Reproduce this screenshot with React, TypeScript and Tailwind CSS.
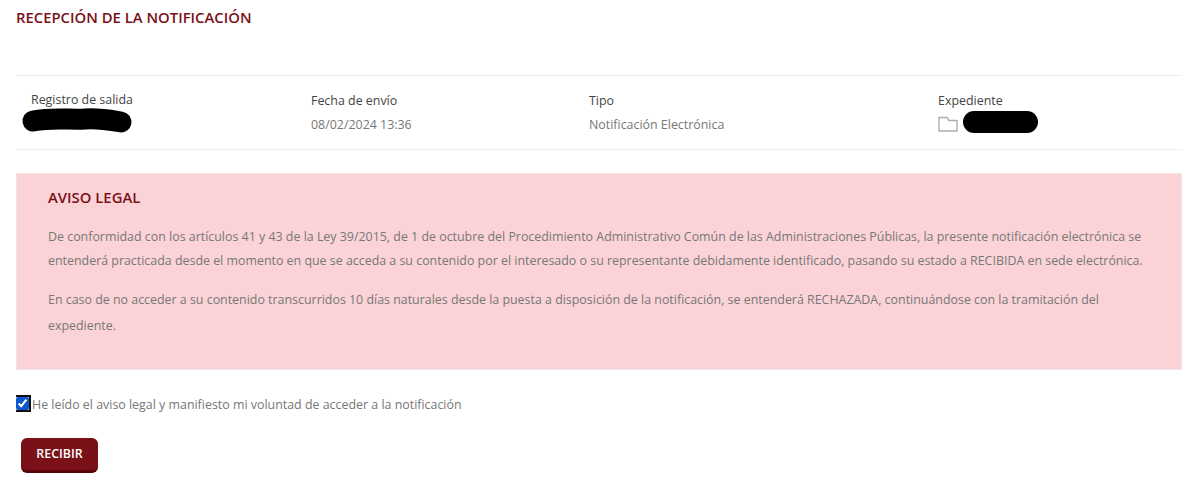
export default function App() {
  return (
    <div className="h-[504px] w-[1200px] overflow-hidden bg-white pl-4 pr-[18px] font-['Open_Sans',sans-serif] text-[12.42px] text-[#777]">
      <h1 className="pt-2 text-[14.85px] leading-[19px] font-semibold text-[#7a1018]">RECEPCIÓN DE LA NOTIFICACIÓN</h1>

      {/* Datos de la notificación */}
      <div className="mt-[48px] flex h-[75px] border-y border-[#eeeeee]">
        <div className="w-[295px] pl-[15px] pt-[15px]">
          <div className="leading-[17px] font-medium text-[#444]">Registro de salida</div>
          <svg width="116" height="28" viewBox="0 0 116 28" className="-ml-3 -mt-[1px]">
            <path d="M14 14C35 10 50 13 66 12C80 11 90 13 102 15" fill="none" stroke="#000" strokeWidth="21" strokeLinecap="round" />
          </svg>
        </div>
        <div className="w-[278px] pt-[16px]">
          <div className="leading-[17px] font-medium text-[#444]">Fecha de envío</div>
          <div className="mt-[7px] leading-[17px]">08/02/2024 13:36</div>
        </div>
        <div className="w-[349px] pt-[16px]">
          <div className="leading-[17px] font-medium text-[#444]">Tipo</div>
          <div className="mt-[7px] leading-[17px]">Notificación Electrónica</div>
        </div>
        <div className="pt-[16px]">
          <div className="leading-[17px] font-medium text-[#444]">Expediente</div>
          <div className="mt-[2px] flex items-center gap-[5px]">
            <svg width="20" height="16" viewBox="0 0 20 16" fill="none" stroke="#aaaaaa" strokeWidth="1.3" className="mt-[4px]">
              <path d="M1 1.5h8l2 3h8V15H1z" />
            </svg>
            <div className="h-[22px] w-[75px] rounded-full bg-black" />
          </div>
        </div>
      </div>

      {/* Aviso legal */}
      <div className="mt-[23px] h-[197px] border border-[#f0e6e7] bg-[#fbd3d7] pl-[31px] pr-4 pt-[13px] text-[#777]">
        <h2 className="text-[14.85px] leading-[20px] font-semibold text-[#7a1018]">AVISO LEGAL</h2>
        <p className="mt-[18px] leading-[24px]">
          De conformidad con los artículos 41 y 43 de la Ley 39/2015, de 1 de octubre del Procedimiento Administrativo Común de las Administraciones Públicas, la presente notificación electrónica se entenderá practicada desde el momento en que se acceda a su contenido por el interesado o su representante debidamente identificado, pasando su estado a RECIBIDA en sede electrónica.
        </p>
        <p className="mt-[14px] leading-[26px]">
          En caso de no acceder a su contenido transcurridos 10 días naturales desde la puesta a disposición de la notificación, se entenderá RECHAZADA, continuándose con la tramitación del expediente.
        </p>
      </div>

      <label className="mt-[25px] flex h-[18px] items-center">
        {/* el borde izquierdo del foco queda recortado, como en la captura */}
        <span className="-mt-[1px] flex h-[19px] w-[16px] items-center overflow-hidden">
          <input type="checkbox" defaultChecked className="m-0 h-[13px] w-[13px] shrink-0 rounded-[2px] accent-[#0b57d0] outline-2 outline-[#101010]" />
        </span>
        <span className="mt-[2px]">He leído el aviso legal y manifiesto mi voluntad de acceder a la notificación</span>
      </label>

      <button className="ml-[5px] mt-[25px] h-[35px] w-[77px] rounded-[6px] border-b-[3px] border-[#5c0209] bg-[#7a1018] text-[12.4px] font-semibold text-white">
        RECIBIR
      </button>
    </div>
  );
}
